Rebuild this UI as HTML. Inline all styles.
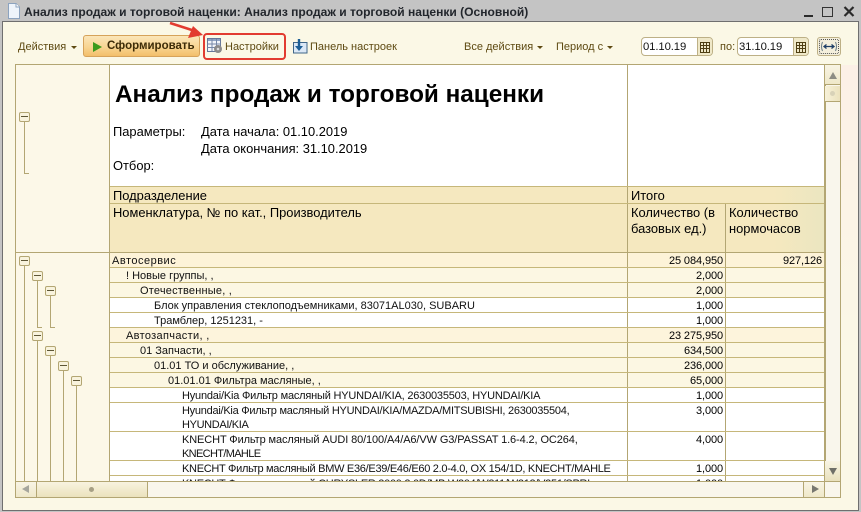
<!DOCTYPE html>
<html lang="ru"><head><meta charset="utf-8"><style>
html,body{margin:0;padding:0}
body{width:861px;height:512px;overflow:hidden;background:#c4c4c4;position:relative;font-family:"Liberation Sans",sans-serif;color:#000}
div,span{position:absolute;white-space:nowrap;box-sizing:border-box}
.l{background:#c6b77a}
.g{background:#b3a673}
.t{font-size:12.9px;line-height:16px;color:#000;margin-top:1px}
.r{font-size:11px;line-height:14px;color:#111;margin-top:1px}
.n{font-size:11px;line-height:14px;text-align:right;color:#000;margin-top:1px;letter-spacing:-.1px}
.tb{font-size:11px;line-height:14px;color:#5e4a12;margin-top:1px}
.m{width:11px;height:10px;border:1px solid #b3a673;background:#f8f3dd;border-radius:2px}
.m:after{content:"";position:absolute;left:1px;right:1px;top:3px;height:1px;background:#5d5636}
.arr{width:0;height:0;border-left:3px solid transparent;border-right:3px solid transparent;border-top:3px solid #5e4a12}
</style></head><body>

<svg style="position:absolute;left:7px;top:2px" width="14" height="18" viewBox="0 0 14 18"><path d="M1.5 1.5H9L12.5 5V16.5H1.5Z" fill="#eef4fb" stroke="#8ca3bf"/><path d="M9 1.5V5H12.5" fill="#fff" stroke="#8ca3bf"/></svg>
<div style="left:24px;top:5px;font-size:12.050px;font-weight:bold;line-height:15px;color:#22262c">Анализ продаж и торговой наценки: Анализ продаж и торговой наценки (Основной)</div>
<div style="left:804px;top:15px;width:9px;height:2px;background:#2a2a2a"></div>
<div style="left:822px;top:7px;width:11px;height:10px;border:1px solid #333"></div>
<svg style="position:absolute;left:843px;top:6px" width="12" height="11" viewBox="0 0 12 11"><path d="M1.500 1L10.500 10M10.500 1L1.500 10" stroke="#2a2a2a" stroke-width="2.200"/></svg>

<div style="left:2px;top:21px;width:857px;height:490px;background:#fbf8e6;border:1px solid #6f6f6f"></div>

<div class="tb" style="left:18px;top:39px">Действия</div>
<div class="arr" style="left:71px;top:46px"></div>
<div style="left:83px;top:35px;width:117px;height:22px;border:1px solid #d6a35a;border-radius:3px;background:linear-gradient(#fbe6b9,#f8d592 55%,#f3bf6b)"></div>
<svg style="position:absolute;left:92px;top:41px" width="11" height="12" viewBox="0 0 11 12"><path d="M1 1L10 6L1 11Z" fill="#3c9a1c"/></svg>
<div style="left:107px;top:39px;font-size:11.5px;font-weight:bold;line-height:14px;color:#3d2c08">Сформировать</div>

<div style="left:203px;top:33px;width:83px;height:27px;border:2px solid #e23b30;border-radius:4px"></div>
<svg style="position:absolute;left:207px;top:38px" width="16" height="16" viewBox="0 0 16 16"><rect x=".5" y=".5" width="13" height="13" fill="#f2f5fa" stroke="#66779a"/><rect x="1" y="1" width="12" height="2" fill="#8ea3c4"/><path d="M5 1V13M9.500 1V13M.5 6H13.500M.5 9.500H13.500" stroke="#7588a8"/><circle cx="11" cy="11" r="4" fill="#8b8b8b"/><circle cx="11" cy="11" r="1.300" fill="#dcdcdc"/></svg>
<div class="tb" style="left:225px;top:39px">Настройки</div>
<svg style="position:absolute;left:293px;top:38px" width="15" height="17" viewBox="0 0 15 17"><rect x=".5" y="4.500" width="13.500" height="10.500" fill="#dbe8f6" stroke="#3f6688"/><path d="M6 1V10" stroke="#1d5f96" stroke-width="2.400"/><path d="M2 8H10L6 13Z" fill="#1d5f96"/></svg>
<div class="tb" style="left:310px;top:39px">Панель настроек</div>
<div class="tb" style="left:464px;top:39px">Все действия</div>
<div class="arr" style="left:537px;top:46px"></div>
<div class="tb" style="left:556px;top:39px">Период с</div>
<div class="arr" style="left:607px;top:46px"></div>

<div style="left:641px;top:37px;width:72px;height:19px;border:1px solid #bdb086;border-radius:4px;background:#fff"></div>
<div style="left:643px;top:39px;font-size:11.300px;letter-spacing:-.1px;line-height:15px;color:#111;margin-top:1px">01.10.19</div>
<div style="left:697px;top:38px;width:15px;height:17px;background:#efe8c8;border-left:1px solid #bdb086;border-radius:0 3px 3px 0"></div>
<svg style="position:absolute;left:700px;top:42px" width="10" height="11" viewBox="0 0 10 11"><path d="M.5 .5H9.500V10.500H.5ZM.5 3.500H9.500M.5 6.500H9.500M3.500 .5V10.500M6.500 .5V10.500" fill="none" stroke="#4e3e12"/></svg>
<div class="tb" style="left:720px;top:39px">по:</div>
<div style="left:737px;top:37px;width:72px;height:19px;border:1px solid #bdb086;border-radius:4px;background:#fff"></div>
<div style="left:739px;top:39px;font-size:11.300px;letter-spacing:-.1px;line-height:15px;color:#111;margin-top:1px">31.10.19</div>
<div style="left:793px;top:38px;width:15px;height:17px;background:#efe8c8;border-left:1px solid #bdb086;border-radius:0 3px 3px 0"></div>
<svg style="position:absolute;left:796px;top:42px" width="10" height="11" viewBox="0 0 10 11"><path d="M.5 .5H9.500V10.500H.5ZM.5 3.500H9.500M.5 6.500H9.500M3.500 .5V10.500M6.500 .5V10.500" fill="none" stroke="#4e3e12"/></svg>
<div style="left:817px;top:37px;width:24px;height:19px;border:1px solid #bdb086;border-radius:3px;background:#f4efdc"></div>
<div style="left:819px;top:39px;width:20px;height:15px;border:1px dotted #555;border-radius:2px"></div>
<svg style="position:absolute;left:820px;top:41px" width="18" height="11" viewBox="0 0 18 11"><path d="M2.500 1Q.5 5.500 2.500 10M15.500 1Q17.500 5.500 15.500 10" fill="none" stroke="#6b7d88"/><path d="M4 5.500H14M6.500 3.500L4 5.500L6.500 7.500M11.500 3.500L14 5.500L11.500 7.500" fill="none" stroke="#1f3f66" stroke-width="1.300"/></svg>

<div style="left:15px;top:64px;width:826px;height:434px;background:#fff;border:1px solid #b3a673"></div>
<div style="left:16px;top:65px;width:94px;height:416px;background:#fcf8e8"></div>
<div style="left:841px;top:65px;width:17px;height:300px;background:linear-gradient(#fcf0e6,#fbf8e6)"></div>

<div style="left:110px;top:187px;width:714px;height:65px;background:linear-gradient(90deg,#f5e8bf 0,#f5e8bf 93%,#ebe6c0 100%)"></div>
<div style="left:110px;top:253px;width:714px;height:15px;background:#fdf3d8"></div>
<div style="left:110px;top:268px;width:714px;height:14px;background:#fcf7e3"></div>
<div style="left:110px;top:283px;width:714px;height:14px;background:#fcf7e3"></div>
<div style="left:110px;top:327px;width:714px;height:15px;background:#fdf4dc"></div>
<div style="left:110px;top:342px;width:714px;height:15px;background:#fcf7e3"></div>
<div style="left:110px;top:357px;width:714px;height:15px;background:#fcf7e3"></div>
<div style="left:110px;top:372px;width:714px;height:15px;background:#fcf7e3"></div>

<div class="g" style="left:109px;top:65px;width:1px;height:416px"></div>
<div class="g" style="left:627px;top:65px;width:1px;height:416px"></div>
<div class="g" style="left:725px;top:203px;width:1px;height:278px"></div>
<div class="g" style="left:824px;top:65px;width:1px;height:416px"></div>

<div class="l" style="left:110px;top:186px;width:714px;height:1px"></div>
<div class="l" style="left:110px;top:203px;width:714px;height:1px"></div>
<div class="g" style="left:16px;top:252px;width:808px;height:1px"></div>
<div class="l" style="left:110px;top:267px;width:714px;height:1px"></div>
<div class="l" style="left:110px;top:282px;width:714px;height:1px"></div>
<div class="l" style="left:110px;top:297px;width:714px;height:1px"></div>
<div class="l" style="left:110px;top:312px;width:714px;height:1px"></div>
<div class="l" style="left:110px;top:327px;width:714px;height:1px"></div>
<div class="l" style="left:110px;top:342px;width:714px;height:1px"></div>
<div class="l" style="left:110px;top:357px;width:714px;height:1px"></div>
<div class="l" style="left:110px;top:372px;width:714px;height:1px"></div>
<div class="l" style="left:110px;top:387px;width:714px;height:1px"></div>
<div class="l" style="left:110px;top:402px;width:714px;height:1px"></div>
<div class="l" style="left:110px;top:431px;width:714px;height:1px"></div>
<div class="l" style="left:110px;top:460px;width:714px;height:1px"></div>
<div class="l" style="left:110px;top:475px;width:714px;height:1px"></div>

<div style="left:115px;top:80px;font-size:24.300px;font-weight:bold;line-height:30px">Анализ продаж и торговой наценки</div>
<div class="t" style="left:113px;top:123px">Параметры:</div>
<div class="t" style="left:201px;top:123px">Дата начала: 01.10.2019</div>
<div class="t" style="left:201px;top:140px">Дата окончания: 31.10.2019</div>
<div class="t" style="left:113px;top:157px">Отбор:</div>
<div class="t" style="left:113px;top:187px">Подразделение</div>
<div class="t" style="left:113px;top:204px">Номенклатура, № по кат., Производитель</div>
<div class="t" style="left:631px;top:187px">Итого</div>
<div class="t" style="left:631px;top:204px">Количество (в</div>
<div class="t" style="left:631px;top:220px">базовых ед.)</div>
<div class="t" style="left:729px;top:204px">Количество</div>
<div class="t" style="left:729px;top:220px">нормочасов</div>

<div class="r" style="left:112px;top:253px;letter-spacing:.5px">Автосервис</div>
<div class="r" style="left:126px;top:268px">! Новые группы, ,</div>
<div class="r" style="left:140px;top:283px;letter-spacing:.2px">Отечественные, ,</div>
<div class="r" style="left:154px;top:298px">Блок управления стеклоподъемниками, 83071AL030, SUBARU</div>
<div class="r" style="left:154px;top:313px">Трамблер, 1251231, -</div>
<div class="r" style="left:126px;top:328px;letter-spacing:.33px">Автозапчасти, ,</div>
<div class="r" style="left:140px;top:343px">01 Запчасти, ,</div>
<div class="r" style="left:154px;top:358px">01.01 ТО и обслуживание, ,</div>
<div class="r" style="left:168px;top:373px">01.01.01 Фильтра масляные, ,</div>
<div class="r" style="left:182px;top:388px;letter-spacing:-.2px">Hyundai/Kia Фильтр масляный HYUNDAI/KIA, 2630035503, HYUNDAI/KIA</div>
<div class="r" style="left:182px;top:403px;letter-spacing:-.26px">Hyundai/Kia Фильтр масляный HYUNDAI/KIA/MAZDA/MITSUBISHI, 2630035504,</div>
<div class="r" style="left:182px;top:417px;letter-spacing:-.35px">HYUNDAI/KIA</div>
<div class="r" style="left:182px;top:432px;letter-spacing:-.11px">KNECHT Фильтр масляный AUDI 80/100/A4/A6/VW G3/PASSAT 1.6-4.2, OC264,</div>
<div class="r" style="left:182px;top:446px;letter-spacing:-.65px">KNECHT/MAHLE</div>
<div class="r" style="left:182px;top:461px;letter-spacing:-.29px">KNECHT Фильтр масляный BMW E36/E39/E46/E60 2.0-4.0, OX 154/1D, KNECHT/MAHLE</div>

<div class="n" style="left:628px;top:253px;width:95px">25 084,950</div>
<div class="n" style="left:726px;top:253px;width:96px">927,126</div>
<div class="n" style="left:628px;top:268px;width:95px">2,000</div>
<div class="n" style="left:628px;top:283px;width:95px">2,000</div>
<div class="n" style="left:628px;top:298px;width:95px">1,000</div>
<div class="n" style="left:628px;top:313px;width:95px">1,000</div>
<div class="n" style="left:628px;top:328px;width:95px">23 275,950</div>
<div class="n" style="left:628px;top:343px;width:95px">634,500</div>
<div class="n" style="left:628px;top:358px;width:95px">236,000</div>
<div class="n" style="left:628px;top:373px;width:95px">65,000</div>
<div class="n" style="left:628px;top:388px;width:95px">1,000</div>
<div class="n" style="left:628px;top:403px;width:95px">3,000</div>
<div class="n" style="left:628px;top:432px;width:95px">4,000</div>
<div class="n" style="left:628px;top:461px;width:95px">1,000</div>
<div style="left:110px;top:476px;width:714px;height:5px;overflow:hidden"><span class="r" style="left:72px;top:0;letter-spacing:-.29px">KNECHT Фильтр масляный CHRYSLER 2000 2.0D/MB W204/W211/W212/V251/SPRI</span><span class="n" style="left:518px;top:0;width:95px">1,000</span></div>
<div class="g" style="left:627px;top:476px;width:1px;height:5px"></div>
<div class="g" style="left:725px;top:476px;width:1px;height:5px"></div>

<div class="g" style="left:24px;top:116px;width:1px;height:58px"></div>
<div class="g" style="left:24px;top:173px;width:5px;height:1px"></div>
<div class="g" style="left:24px;top:260px;width:1px;height:221px"></div>
<div class="g" style="left:37px;top:275px;width:1px;height:52px"></div>
<div class="g" style="left:37px;top:327px;width:5px;height:1px"></div>
<div class="g" style="left:50px;top:290px;width:1px;height:37px"></div>
<div class="g" style="left:50px;top:327px;width:5px;height:1px"></div>
<div class="g" style="left:37px;top:335px;width:1px;height:146px"></div>
<div class="g" style="left:50px;top:350px;width:1px;height:131px"></div>
<div class="g" style="left:63px;top:365px;width:1px;height:116px"></div>
<div class="g" style="left:76px;top:380px;width:1px;height:101px"></div>
<div class="m" style="left:19px;top:112px"></div>
<div class="m" style="left:19px;top:256px"></div>
<div class="m" style="left:32px;top:271px"></div>
<div class="m" style="left:45px;top:286px"></div>
<div class="m" style="left:32px;top:331px"></div>
<div class="m" style="left:45px;top:346px"></div>
<div class="m" style="left:58px;top:361px"></div>
<div class="m" style="left:71px;top:376px"></div>

<div style="left:825px;top:65px;width:15px;height:416px;background:#f9f6ec;border-left:1px solid #b3a673"></div>
<div style="left:825px;top:65px;width:15px;height:20px;background:linear-gradient(#f8f4e4,#efe8c9);border-bottom:1px solid #b3a673"></div>
<div style="left:825px;top:86px;width:15px;height:16px;background:linear-gradient(90deg,#f7f1d9,#ebe2bd);border-bottom:1px solid #b3a673"></div>
<svg style="position:absolute;left:828px;top:71px" width="10" height="9" viewBox="0 0 10 9"><path d="M5 1L9 8H1Z" fill="#8d8d84"/></svg>
<div style="left:830px;top:91px;width:5px;height:5px;border-radius:3px;background:#d8d2b8"></div>
<div style="left:825px;top:461px;width:15px;height:20px;background:linear-gradient(#f8f4e4,#e9e1bd)"></div>
<svg style="position:absolute;left:828px;top:467px" width="10" height="9" viewBox="0 0 10 9"><path d="M1 1H9L5 8Z" fill="#6f6f68"/></svg>

<div style="left:16px;top:481px;width:824px;height:16px;background:#f9f6ec;border-top:1px solid #b3a673"></div>
<div style="left:16px;top:482px;width:21px;height:15px;background:linear-gradient(#f8f4e4,#efe8c9);border-right:1px solid #b3a673"></div>
<div style="left:37px;top:482px;width:111px;height:15px;background:linear-gradient(#f8f3df,#ebe2bd);border-right:1px solid #b3a673"></div>
<svg style="position:absolute;left:21px;top:484px" width="9" height="10" viewBox="0 0 9 10"><path d="M8 1V9L1 5Z" fill="#a6a69c"/></svg>
<div style="left:89px;top:487px;width:5px;height:5px;border-radius:3px;background:#a69f84"></div>
<div style="left:803px;top:482px;width:22px;height:15px;background:linear-gradient(#f8f4e4,#efe8c9);border-left:1px solid #b3a673;border-right:1px solid #b3a673"></div>
<svg style="position:absolute;left:811px;top:484px" width="9" height="10" viewBox="0 0 9 10"><path d="M1 1V9L8 5Z" fill="#77776f"/></svg>

<svg style="position:absolute;left:165px;top:20px" width="45" height="20" viewBox="0 0 45 20"><path d="M5 3L30 11" stroke="#e23b30" stroke-width="2.500"/><path d="M28 6L38 15L23 18Z" fill="#e23b30"/></svg>
</body></html>
